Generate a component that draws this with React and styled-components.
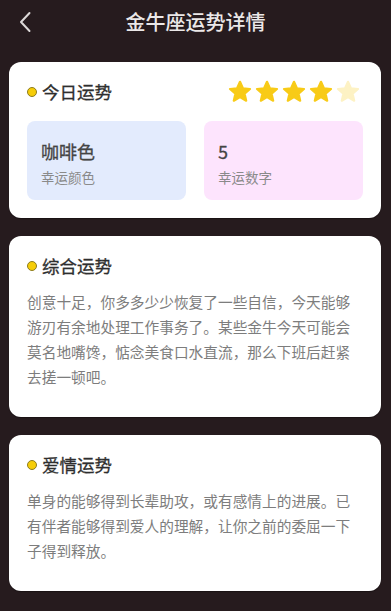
import React from 'react'
import styled, { createGlobalStyle } from 'styled-components'

const GlobalStyle = createGlobalStyle`
  html, body {
    margin: 0;
    padding: 0;
    background: #261b1e;
  }
  body {
    font-family: "Noto Sans CJK SC", "Noto Sans", sans-serif;
  }
`

const Page = styled.div`
  width: 391px;
  min-height: 611px;
  background: #261b1e;
  display: flex;
  flex-direction: column;
`

const Header = styled.div`
  height: 44px;
  position: relative;
  display: flex;
  align-items: center;
  justify-content: center;
`

const BackButton = styled.div`
  position: absolute;
  left: 15px;
  top: 10px;
  width: 20px;
  height: 24px;
  display: flex;
  align-items: center;
  justify-content: center;
`

const Title = styled.h1`
  margin: 0;
  font-size: 20px;
  font-weight: 500;
  line-height: 26px;
  color: #ebe8e8;
`

const Content = styled.div`
  padding: 18px 10px 18px 9px;
  display: flex;
  flex-direction: column;
  gap: 18px;
`

const Card = styled.div`
  background: #fff;
  border-radius: 12px;
  padding: 18px 18px ${p => p.$bottom || 18}px 18px;
  box-shadow: 0 1px 1px rgba(0, 0, 0, 0.35);
`

const CardHead = styled.div`
  display: flex;
  align-items: center;
  justify-content: space-between;
  height: 24px;
`

const CardTitle = styled.div`
  display: flex;
  align-items: center;
  gap: 5px;
  font-size: 17.5px;
  font-weight: 400;
  color: #2e2e2e;
  line-height: 24px;
  -webkit-text-stroke: 0.3px #2e2e2e;
`

const Dot = styled.span`
  width: 8px;
  height: 8px;
  border-radius: 50%;
  background: #f6cd08;
  border: 1.5px solid #8d7c1e;
  flex-shrink: 0;
`

const Stars = styled.div`
  display: flex;
  gap: 3px;
  margin-right: 3px;
`

const Boxes = styled.div`
  margin-top: 17px;
  display: grid;
  grid-template-columns: 1fr 1fr;
  gap: 18px;
`

const InfoBox = styled.div`
  background: ${p => p.$bg};
  border-radius: 8px;
  padding: 18px 14px 13px;
  height: 79px;
  box-sizing: border-box;
`

const InfoValue = styled.div`
  font-size: 18px;
  line-height: 24px;
  color: #444;
  font-weight: 400;
  -webkit-text-stroke: 0.3px #444;
`

const InfoLabel = styled.div`
  margin-top: 4px;
  font-size: 13.5px;
  line-height: 20px;
  color: #8a8a8a;
`

const Body = styled.p`
  margin: 11px 0 0;
  font-size: 14.7px;
  line-height: 25px;
  color: #7d7d7d;
`

const Star = ({ color }) => (
  <svg width="24" height="24" viewBox="0 0 24 24">
    <path
      d="M12 1.8 L14.9 8.3 L22 9 L16.6 13.7 L18.2 20.7 L12 17 L5.8 20.7 L7.4 13.7 L2 9 L9.1 8.3 Z"
      fill={color}
      stroke={color}
      strokeWidth="2.2"
      strokeLinejoin="round"
    />
  </svg>
)

const Section = ({ title, children, bottom }) => (
  <Card $bottom={bottom}>
    <CardHead>
      <CardTitle><Dot />{title}</CardTitle>
    </CardHead>
    <Body>{children}</Body>
  </Card>
)

export default function App() {
  const score = 4
  return (
    <Page>
      <GlobalStyle />
      <Header>
        <BackButton>
          <svg width="14" height="22" viewBox="0 0 14 22">
            <path d="M11.5 2 L3 11 L11.5 20" fill="none" stroke="#dcd8d8" strokeWidth="2" strokeLinecap="round" strokeLinejoin="round" />
          </svg>
        </BackButton>
        <Title>金牛座运势详情</Title>
      </Header>
      <Content>
        <Card>
          <CardHead>
            <CardTitle><Dot />今日运势</CardTitle>
            <Stars>
              {[0, 1, 2, 3, 4].map(i => (
                <Star key={i} color={i < score ? '#f8cb17' : '#fdf2c4'} />
              ))}
            </Stars>
          </CardHead>
          <Boxes>
            <InfoBox $bg="#e3ebfd">
              <InfoValue>咖啡色</InfoValue>
              <InfoLabel>幸运颜色</InfoLabel>
            </InfoBox>
            <InfoBox $bg="#fde4fd">
              <InfoValue>5</InfoValue>
              <InfoLabel>幸运数字</InfoLabel>
            </InfoBox>
          </Boxes>
        </Card>
        <Section title="综合运势" bottom={28}>
          创意十足，你多多少少恢复了一些自信，今天能够游刃有余地处理工作事务了。某些金牛今天可能会莫名地嘴馋，惦念美食口水直流，那么下班后赶紧去搓一顿吧。
        </Section>
        <Section title="爱情运势" bottom={28}>
          单身的能够得到长辈助攻，或有感情上的进展。已有伴者能够得到爱人的理解，让你之前的委屈一下子得到释放。
        </Section>
      </Content>
    </Page>
  )
}
